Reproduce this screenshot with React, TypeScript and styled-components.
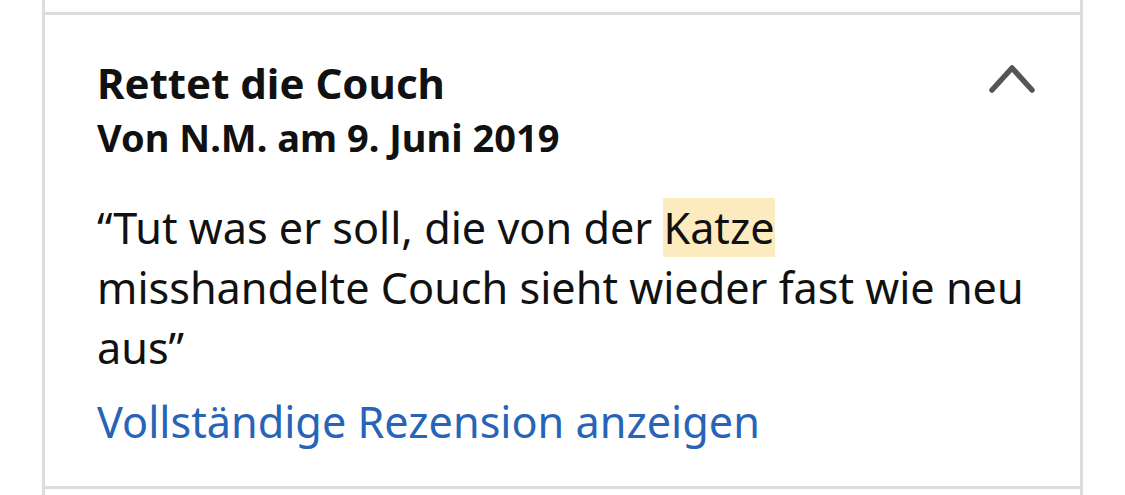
import React from "react";
import styled, { createGlobalStyle } from "styled-components";

const Global = createGlobalStyle`
  html, body { margin: 0; padding: 0; background: #fff; }
  body { font-family: "Noto Sans", "Open Sans", sans-serif; color: #111; }
`;

const List = styled.div`
  margin-left: 42px;
  width: 1041px;
  box-sizing: border-box;
  border-left: 3px solid #dddddd;
  border-right: 3px solid #dddddd;
`;

const Stub = styled.div<{ $h: number }>`
  height: ${(p) => p.$h}px;
`;

const Card = styled.section`
  border-top: 3px solid #dddddd;
  border-bottom: 3px solid #dddddd;
  padding: 43px 45px 34px 52px;
`;

const Header = styled.div`
  display: flex;
  align-items: flex-start;
  justify-content: space-between;
`;

const Title = styled.h3`
  margin: 0;
  font-size: 42px;
  line-height: 50px;
  font-weight: 700;
`;

const Meta = styled.div`
  margin: 4px 0 0;
  font-size: 38px;
  line-height: 50px;
  font-weight: 700;
`;

const Toggle = styled.button`
  border: 0;
  background: none;
  padding: 0;
  display: flex;
  cursor: pointer;
`;

const Body = styled.p`
  margin: 36px 0 0;
  font-size: 43.2px;
  line-height: 60px;
  font-weight: 400;
`;

const Mark = styled.mark`
  background: #fdebc0;
  color: inherit;
`;

const Link = styled.a`
  display: block;
  font-size: 43.2px;
  line-height: 60px;
  color: #2764b8;
  text-decoration: none;
  margin-top: 14px;
`;

export default function App() {
  return (
    <>
      <Global />
      <List>
        <Stub $h={12} />
        <Card>
          <Header>
            <div>
              <Title>Rettet die Couch</Title>
              <Meta>Von N.M. am 9. Juni 2019</Meta>
            </div>
            <Toggle aria-label="Einklappen">
              <svg width="46" height="40" viewBox="0 0 46 40">
                <polyline
                  points="3,32 23,10 43,32"
                  fill="none"
                  stroke="#555"
                  strokeWidth="5.5"
                  strokeLinecap="round"
                  strokeLinejoin="round"
                />
              </svg>
            </Toggle>
          </Header>
          <Body>
            “Tut was er soll, die von der <Mark>Katze</Mark> misshandelte Couch
            sieht wieder fast wie neu aus”
          </Body>
          <Link href="#">Vollständige Rezension anzeigen</Link>
        </Card>
        <Stub $h={20} />
      </List>
    </>
  );
}
